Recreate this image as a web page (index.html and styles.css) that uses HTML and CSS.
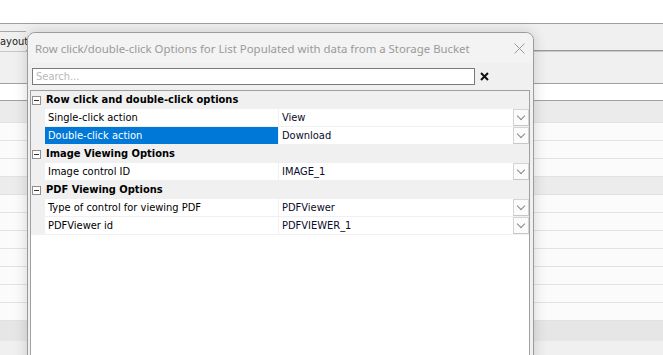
FILE: index.html
```html
<!DOCTYPE html>
<html lang="en">
<head>
    <meta charset="UTF-8">
    <title>Row click/double-click Options</title>
    <link rel="stylesheet" href="styles.css">
</head>
<body>
    <!-- Ventana de fondo -->
    <div class="topbar"></div>
    <div class="tabstrip">
        <div class="tab">ayout</div>
    </div>
    <div class="toolbar"></div>
    <div class="filter-band"></div>
    <div class="bg-list">
        <div class="bg-row head"></div>
        <div class="bg-row"></div>
        <div class="bg-row"></div>
        <div class="bg-row"></div>
        <div class="bg-row shade"></div>
        <div class="bg-row"></div>
        <div class="bg-row"></div>
        <div class="bg-row"></div>
        <div class="bg-row"></div>
        <div class="bg-row"></div>
        <div class="bg-row"></div>
        <div class="bg-row"></div>
    </div>
    <div class="bg-footer"></div>

    <!-- Diálogo -->
    <div class="dialog">
        <div class="title-bar">
            <span class="title">Row click/double-click Options for List Populated with data from a Storage Bucket</span>
            <svg class="close" width="11" height="11" viewBox="0 0 11 11">
                <path d="M0.5 0.5 L10.5 10.5 M10.5 0.5 L0.5 10.5" stroke="#9a9a9a" stroke-width="1" fill="none"/>
            </svg>
        </div>
        <div class="search-row">
            <input type="text" class="search" placeholder="Search...">
            <svg class="clear" width="9" height="9" viewBox="0 0 9 9">
                <path d="M1 1 L8 8 M8 1 L1 8" stroke="#111" stroke-width="2" fill="none"/>
            </svg>
        </div>
        <div class="grid">
            <div class="category"><span class="toggle"></span>Row click and double-click options</div>
            <div class="prop">
                <div class="label">Single-click action</div>
                <div class="value">View<span class="drop"></span></div>
            </div>
            <div class="prop selected">
                <div class="label">Double-click action</div>
                <div class="value">Download<span class="drop"></span></div>
            </div>
            <div class="category"><span class="toggle"></span>Image Viewing Options</div>
            <div class="prop">
                <div class="label">Image control ID</div>
                <div class="value">IMAGE_1<span class="drop"></span></div>
            </div>
            <div class="category"><span class="toggle"></span>PDF Viewing Options</div>
            <div class="prop">
                <div class="label">Type of control for viewing PDF</div>
                <div class="value">PDFViewer<span class="drop"></span></div>
            </div>
            <div class="prop">
                <div class="label">PDFViewer id</div>
                <div class="value">PDFVIEWER_1<span class="drop"></span></div>
            </div>
        </div>
    </div>
</body>
</html>
```

FILE: styles.css
```css
/* Estilos generales */
body {
    margin: 0;
    width: 663px;
    height: 355px;
    overflow: hidden;
    position: relative;
    background-color: #f0f0f0;
    font-family: 'DejaVu Sans', sans-serif;
    font-stretch: condensed;
    font-size: 11px;
}

/* Ventana de fondo */
.topbar {
    height: 23px;
    background-color: #fff;
    border-bottom: 1px solid #a0a0a0;
}

.tabstrip {
    height: 27px;
    padding-top: 7px;
    box-sizing: border-box;
    border-bottom: 1px solid #9a9a9a;
    box-shadow: 0 1px 0 #c8c8c8;
}

.tab {
    width: 26px;
    height: 19px;
    line-height: 19px;
    white-space: nowrap;
    font-size: 11px;
    color: #222;
    border-top: 1px solid #a8a8a8;
    background-color: #f0f0f0;
}

.toolbar {
    height: 32px;
    border-bottom: 1px solid #a0a0a0;
}

.filter-band {
    height: 16px;
    background-color: #fff;
    border-bottom: 1px solid #a0a0a0;
}

.bg-row {
    height: 17px;
    border-bottom: 1px solid #e2e2e2;
    background-color: #fbfbfb;
}

.bg-row.head {
    height: 21px;
    background-color: #ebebeb;
}

.bg-row.shade {
    background-color: #ececec;
}

.bg-footer {
    height: 20px;
    background-color: #e6e6e6;
}

/* Diálogo */
.dialog {
    position: absolute;
    top: 32px;
    left: 27px;
    width: 505px;
    height: 340px;
    background-color: #f0f0f0;
    border: 1px solid #9c9c9c;
    border-radius: 8px 8px 0 0;
    box-shadow: 0 0 14px rgba(0, 0, 0, 0.16);
}

.title-bar {
    height: 30px;
    display: flex;
    align-items: center;
    padding: 0 8px 0 7px;
    background-color: #f3f3f3;
    border-radius: 8px 8px 0 0;
}

.title {
    flex: 1;
    font-family: 'Noto Sans', sans-serif;
    font-stretch: normal;
    font-size: 11.4px;
    color: #9a9a9a;
    white-space: nowrap;
}

.search-row {
    display: flex;
    align-items: center;
    height: 17px;
    padding: 5px 0 0 4px;
}

.search {
    width: 443px;
    height: 17px;
    box-sizing: border-box;
    margin: 0;
    padding: 0 3px;
    border: 1px solid #7a7a7a;
    background-color: #fff;
    font-family: 'DejaVu Sans', sans-serif;
    font-stretch: condensed;
    font-size: 11px;
    outline: none;
}

.search::placeholder {
    color: #b8b8b8;
}

.clear {
    margin-left: 5px;
}

/* Cuadrícula de propiedades */
.grid {
    margin: 5px 3px 0 2px;
    height: 300px;
    background-color: #fff;
    border: 1px solid #a0a0a0;
    border-bottom: none;
}

.category {
    height: 18px;
    line-height: 18px;
    background-color: #f0f0f0;
    font-weight: bold;
    color: #000;
    display: flex;
    align-items: center;
}

.toggle {
    width: 7px;
    height: 7px;
    margin: 0 5px 0 1px;
    border: 1px solid #8f8f8f;
    background:
        linear-gradient(#333, #333) center / 5px 1px no-repeat,
        #fff;
}

.prop {
    display: flex;
    height: 17px;
    border-bottom: 1px solid #f0f0f0;
    border-left: 14px solid #f0f0f0;
}

.label {
    width: 230px;
    padding-left: 3px;
    line-height: 17px;
    color: #000;
    border-right: 1px solid #f0f0f0;
}

.selected .label {
    background-color: #0078d7;
    color: #fff;
}

.value {
    flex: 1;
    position: relative;
    padding-left: 3px;
    line-height: 17px;
    color: #0a0a2a;
}

.drop {
    position: absolute;
    top: 0;
    right: 0;
    width: 16px;
    height: 17px;
    border: 1px solid #d4d4d4;
    border-bottom-color: #c8c8c8;
    background-color: #fbfbfb;
    box-sizing: border-box;
}

.drop::after {
    content: "";
    position: absolute;
    left: 4px;
    top: 3px;
    width: 5px;
    height: 5px;
    border-right: 1px solid #888;
    border-bottom: 1px solid #888;
    transform: rotate(45deg);
}
```
